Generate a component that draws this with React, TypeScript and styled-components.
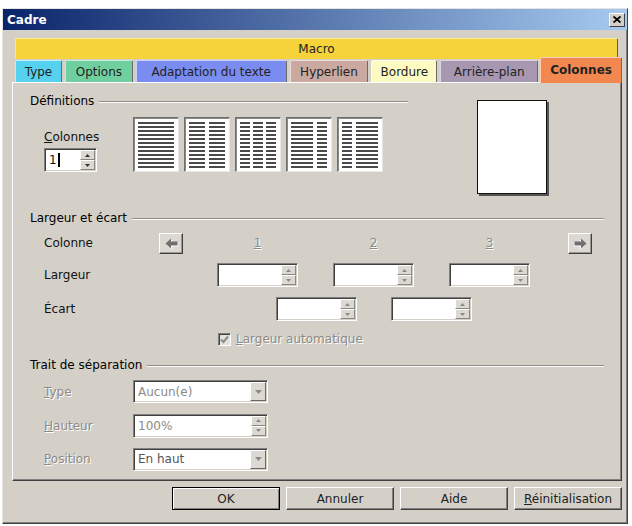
import React from "react";
import styled, { createGlobalStyle } from "styled-components";

const GlobalStyle = createGlobalStyle`
  html, body {
    margin: 0;
    padding: 0;
    background: #fff;
  }
  body {
    font-family: "DejaVu Sans", "Liberation Sans", sans-serif;
    font-size: 12px;
    color: #000;
  }
`;

const FACE = "#d4d0c8";
const GREY_TEXT = "#8c8a86";

const Window = styled.div`
  box-sizing: border-box;
  width: 626px;
  height: 516px;
  margin: 8px 0 0 2px;
  background: ${FACE};
  border: 1px solid;
  border-color: #e6e4e0 #404040 #404040 #e6e4e0;
  box-shadow: inset -1px -1px 0 #808080;
  display: flex;
  flex-direction: column;
`;

const TitleBar = styled.div`
  height: 21px;
  flex: none;
  display: flex;
  align-items: center;
  justify-content: space-between;
  padding: 0 2px 0 4px;
  background: linear-gradient(to right, #0a246a, #a6caf0);
`;

const Title = styled.span`
  color: #fff;
  font-weight: bold;
  font-size: 12px;
`;

const CloseButton = styled.div`
  box-sizing: border-box;
  width: 16px;
  height: 14px;
  background: ${FACE};
  border: 1px solid;
  border-color: #fff #404040 #404040 #fff;
  display: flex;
  align-items: center;
  justify-content: center;
`;

const Body = styled.div`
  flex: 1;
  display: flex;
  flex-direction: column;
  padding: 8px 5px 0 9px;
`;

const TabStrip = styled.div`
  padding-left: 3px;
  display: flex;
  flex-direction: column;
`;

const MacroTab = styled.div`
  box-sizing: border-box;
  height: 21px;
  margin-right: 4px;
  background: #f6d33b;
  border-top: 1px solid #fbe98f;
  border-left: 1px solid #fbe98f;
  border-right: 1px solid #5a5a4a;
  border-radius: 2px 2px 0 0;
  display: flex;
  align-items: center;
  justify-content: center;
  color: #222;
`;

const TabRow = styled.div`
  height: 24px;
  margin-top: -1px;
  display: flex;
  align-items: flex-end;
  gap: 3px;
  position: relative;
  z-index: 1;
`;

const Tab = styled.div<{ $bg: string; $w: number; $active?: boolean }>`
  box-sizing: border-box;
  width: ${(p) => p.$w}px;
  height: ${(p) => (p.$active ? 26 : 22)}px;
  margin-left: ${(p) => (p.$active ? -1 : 0)}px;
  margin-bottom: ${(p) => (p.$active ? -1 : 0)}px;
  background: ${(p) => p.$bg};
  border-top: 1px solid rgba(255, 255, 255, 0.6);
  border-left: 1px solid rgba(255, 255, 255, 0.6);
  border-right: 1px solid #6a6a6a;
  border-radius: 2px 2px 0 0;
  display: flex;
  align-items: center;
  justify-content: center;
  color: #222;
  font-weight: ${(p) => (p.$active ? "bold" : "normal")};
  padding-bottom: ${(p) => (p.$active ? 2 : 0)}px;
`;

const Panel = styled.div`
  box-sizing: border-box;
  height: 399px;
  border: 1px solid;
  border-color: #fff #404040 #404040 #fff;
  box-shadow: inset -1px -1px 0 #808080;
  padding: 11px 17px 0 17px;
  display: flex;
  flex-direction: column;
`;

const Section = styled.div<{ $mt?: number }>`
  margin-top: ${(p) => p.$mt ?? 0}px;
  display: flex;
  flex-direction: column;
`;

const Header = styled.div`
  height: 15px;
  line-height: 15px;
  display: flex;
  align-items: center;
  gap: 5px;
`;

const HeaderLine = styled.div`
  flex: 1;
  height: 0;
  border-top: 1px solid #8e8c88;
  border-bottom: 1px solid #fff;
`;

const DefBlock = styled.div`
  display: flex;
  align-items: flex-start;
`;

const DefLeft = styled.div`
  width: 378px;
  display: flex;
  flex-direction: column;
`;

const DefRow = styled.div`
  margin-top: 8px;
  display: flex;
  align-items: flex-start;
`;

const ColumnsGroup = styled.div`
  width: 89px;
  padding: 13px 0 0 14px;
  display: flex;
  flex-direction: column;
  gap: 4px;
`;

const IconRow = styled.div`
  display: flex;
  gap: 5px;
`;

const IconBox = styled.div`
  box-sizing: border-box;
  width: 46px;
  height: 55px;
  background: #fff;
  border: 1px solid;
  border-color: #6e6e6e #e8e8e8 #e8e8e8 #6e6e6e;
  box-shadow: inset 1px 1px 0 #8a8a8a;
`;

const Preview = styled.div`
  box-sizing: border-box;
  width: 70px;
  height: 94px;
  margin: 6px 0 0 69px;
  background: #fff;
  border: 1px solid #111;
  box-shadow: 2px 2px 0 #555;
`;

const Row = styled.div<{ $mt?: number; $h?: number }>`
  margin-top: ${(p) => p.$mt ?? 0}px;
  height: ${(p) => p.$h ?? 24}px;
  padding-left: 14px;
  display: flex;
  align-items: center;
`;

const Label = styled.span<{ $w?: number; $disabled?: boolean }>`
  flex: none;
  width: ${(p) => (p.$w ? `${p.$w}px` : "auto")};
  color: ${(p) => (p.$disabled ? GREY_TEXT : "#111")};
  text-shadow: ${(p) => (p.$disabled ? "1px 1px 0 #fff" : "none")};
`;

const U = styled.span`
  text-decoration: underline;
`;

const Cells = styled.div<{ $ml?: number; $gap: number }>`
  margin-left: ${(p) => p.$ml ?? 0}px;
  display: flex;
  gap: ${(p) => p.$gap}px;
`;

const NumCell = styled.div`
  width: 81px;
  text-align: center;
  color: ${GREY_TEXT};
  text-shadow: 1px 1px 0 #fff;
  text-decoration: underline;
`;

const ArrowButton = styled.div<{ $ml?: number }>`
  box-sizing: border-box;
  width: 24px;
  height: 21px;
  margin-left: ${(p) => p.$ml ?? 0}px;
  background: #dcd9d2;
  border: 1px solid;
  border-color: #fff #404040 #404040 #fff;
  box-shadow: inset -1px -1px 0 #9a9892;
  display: flex;
  align-items: center;
  justify-content: center;
`;

const Field = styled.div<{ $w: number; $h?: number }>`
  box-sizing: border-box;
  flex: none;
  width: ${(p) => p.$w}px;
  height: ${(p) => p.$h ?? 24}px;
  background: #fff;
  border: 1px solid;
  border-color: #808080 #fff #fff #808080;
  box-shadow: inset 1px 1px 0 #404040, inset -1px -1px 0 ${FACE};
  display: flex;
  padding: 1px;
`;

const FieldText = styled.div<{ $color?: string }>`
  flex: 1;
  padding-left: 3px;
  display: flex;
  align-items: center;
  color: ${(p) => p.$color ?? "#111"};
`;

const Caret = styled.span`
  width: 2px;
  height: 14px;
  margin-left: 1px;
  background: #000;
`;

const SpinColumn = styled.div`
  width: 15px;
  display: flex;
  flex-direction: column;
`;

const SpinButton = styled.div`
  box-sizing: border-box;
  flex: 1;
  background: #dcd9d2;
  border: 1px solid;
  border-color: #fff #8a8882 #8a8882 #fff;
  display: flex;
  align-items: center;
  justify-content: center;
`;

const ComboButton = styled.div`
  box-sizing: border-box;
  width: 16px;
  background: #dcd9d2;
  border: 1px solid;
  border-color: #fff #6a6862 #6a6862 #fff;
  display: flex;
  align-items: center;
  justify-content: center;
`;

const CheckBox = styled.div`
  box-sizing: border-box;
  width: 13px;
  height: 13px;
  margin-left: 174px;
  background: #e4e2dd;
  border: 1px solid;
  border-color: #808080 #fff #fff #808080;
  box-shadow: inset 1px 1px 0 #404040;
  display: flex;
  align-items: center;
  justify-content: center;
`;

const CheckText = styled.span`
  margin-left: 5px;
  color: ${GREY_TEXT};
  text-shadow: 1px 1px 0 #fff;
`;

const ButtonBar = styled.div`
  margin-top: 6px;
  display: flex;
  justify-content: flex-end;
  gap: 6px;
`;

const Button = styled.div<{ $default?: boolean }>`
  box-sizing: border-box;
  width: 108px;
  height: 23px;
  background: ${FACE};
  border: 1px solid;
  border-color: ${(p) =>
    p.$default ? "#000" : "#fff #404040 #404040 #fff"};
  box-shadow: ${(p) =>
    p.$default
      ? "inset 1px 1px 0 #fff, inset -1px -1px 0 #808080"
      : "inset -1px -1px 0 #808080"};
  display: flex;
  align-items: center;
  justify-content: center;
  color: #222;
`;

const TABS = [
  { label: "Type", bg: "#56d2ef", w: 47 },
  { label: "Options", bg: "#70cf9e", w: 68 },
  { label: "Adaptation du texte", bg: "#7a8cf0", w: 151 },
  { label: "Hyperlien", bg: "#caa9a1", w: 79 },
  { label: "Bordure", bg: "#fdfbc2", w: 66 },
  { label: "Arrière-plan", bg: "#a897b1", w: 98 },
  { label: "Colonnes", bg: "#f2884f", w: 82, active: true },
];

// column layout presets: [x, width] of each text column
const PRESETS: [number, number][][] = [
  [[4, 36]],
  [
    [4, 16],
    [24, 16],
  ],
  [
    [4, 10],
    [17, 10],
    [30, 10],
  ],
  [
    [4, 22],
    [30, 10],
  ],
  [
    [4, 10],
    [18, 22],
  ],
];

const LINE_YS = Array.from({ length: 12 }, (_, i) => 4 + i * 4);

const ColumnIcon = ({ cols }: { cols: [number, number][] }) => (
  <IconBox>
    <svg width="44" height="53" viewBox="0 0 44 53">
      {cols.map(([x, w]) =>
        LINE_YS.map((y) => (
          <rect key={`${x}-${y}`} x={x} y={y} width={w} height={2} fill="#4a4a4a" />
        ))
      )}
    </svg>
  </IconBox>
);

const Triangle = ({ dir, color }: { dir: "up" | "down"; color: string }) => (
  <svg width="5" height="3" viewBox="0 0 5 3">
    <polygon
      points={dir === "up" ? "0,3 5,3 2.5,0" : "0,0 5,0 2.5,3"}
      fill={color}
    />
  </svg>
);

const Spinner = ({
  w,
  children,
  enabled,
}: {
  w: number;
  children?: React.ReactNode;
  enabled?: boolean;
}) => (
  <Field $w={w}>
    <FieldText>{children}</FieldText>
    <SpinColumn>
      <SpinButton>
        <Triangle dir="up" color={enabled ? "#333" : "#8a8a8a"} />
      </SpinButton>
      <SpinButton>
        <Triangle dir="down" color={enabled ? "#333" : "#8a8a8a"} />
      </SpinButton>
    </SpinColumn>
  </Field>
);

const Combo = ({ text, color }: { text: string; color: string }) => (
  <Field $w={135} $h={23}>
    <FieldText $color={color}>{text}</FieldText>
    <ComboButton>
      <svg width="7" height="4" viewBox="0 0 7 4">
        <polygon points="0,0 7,0 3.5,4" fill="#8a8a8a" />
      </svg>
    </ComboButton>
  </Field>
);

const BlockArrow = ({ dir }: { dir: "left" | "right" }) => (
  <svg width="13" height="11" viewBox="0 0 13 11">
    <g transform={dir === "right" ? "translate(13,0) scale(-1,1)" : undefined}>
      <polygon points="0.5,5.5 6,0.5 6,3.5 12.5,3.5 12.5,7.5 6,7.5 6,10.5" fill="#fff" transform="translate(1,1)" />
      <polygon points="0.5,5.5 6,0.5 6,3.5 12.5,3.5 12.5,7.5 6,7.5 6,10.5" fill="#707070" />
    </g>
  </svg>
);

export default function App() {
  return (
    <>
      <GlobalStyle />
      <Window>
        <TitleBar>
          <Title>Cadre</Title>
          <CloseButton>
            <svg width="8" height="7" viewBox="0 0 8 7">
              <path d="M0.5 0.5 L7.5 6.5 M7.5 0.5 L0.5 6.5" stroke="#000" strokeWidth="1.8" />
            </svg>
          </CloseButton>
        </TitleBar>

        <Body>
          <TabStrip>
            <MacroTab>Macro</MacroTab>
            <TabRow>
              {TABS.map((t) => (
                <Tab key={t.label} $bg={t.bg} $w={t.w} $active={t.active}>
                  {t.label}
                </Tab>
              ))}
            </TabRow>
          </TabStrip>

          <Panel>
            <DefBlock>
              <DefLeft>
                <Header>
                  Définitions
                  <HeaderLine />
                </Header>
                <DefRow>
                  <ColumnsGroup>
                    <Label>
                      <U>C</U>olonnes
                    </Label>
                    <Spinner w={53} enabled>
                      1<Caret />
                    </Spinner>
                  </ColumnsGroup>
                  <IconRow>
                    {PRESETS.map((cols, i) => (
                      <ColumnIcon key={i} cols={cols} />
                    ))}
                  </IconRow>
                </DefRow>
              </DefLeft>
              <Preview />
            </DefBlock>

            <Section $mt={17}>
              <Header>
                Largeur et écart
                <HeaderLine />
              </Header>
              <Row $mt={5}>
                <Label $w={115}>Colonne</Label>
                <ArrowButton>
                  <BlockArrow dir="left" />
                </ArrowButton>
                <Cells $ml={34} $gap={35}>
                  <NumCell>1</NumCell>
                  <NumCell>2</NumCell>
                  <NumCell>3</NumCell>
                </Cells>
                <ArrowButton $ml={38}>
                  <BlockArrow dir="right" />
                </ArrowButton>
              </Row>
              <Row $mt={8}>
                <Label $w={173}>Largeur</Label>
                <Cells $gap={35}>
                  <Spinner w={81} />
                  <Spinner w={81} />
                  <Spinner w={81} />
                </Cells>
              </Row>
              <Row $mt={10}>
                <Label $w={232}>Écart</Label>
                <Cells $gap={34}>
                  <Spinner w={81} />
                  <Spinner w={81} />
                </Cells>
              </Row>
              <Row $mt={10} $h={16}>
                <CheckBox>
                  <svg width="9" height="9" viewBox="0 0 9 9">
                    <path d="M1 4.5 L3.5 7 L8 1.5" stroke="#8a8a8a" strokeWidth="2" fill="none" />
                  </svg>
                </CheckBox>
                <CheckText>
                  <U>L</U>argeur automatique
                </CheckText>
              </Row>
            </Section>

            <Section $mt={11}>
              <Header>
                Trait de séparation
                <HeaderLine />
              </Header>
              <Row $mt={7} $h={23}>
                <Label $w={89} $disabled>
                  <U>T</U>ype
                </Label>
                <Combo text="Aucun(e)" color="#8c8a86" />
              </Row>
              <Row $mt={11} $h={23}>
                <Label $w={89} $disabled>
                  <U>H</U>auteur
                </Label>
                <Spinner w={135}>
                  <span style={{ color: "#8c8a86" }}>100%</span>
                </Spinner>
              </Row>
              <Row $mt={10} $h={24}>
                <Label $w={89} $disabled>
                  <U>P</U>osition
                </Label>
                <Combo text="En haut" color="#555" />
              </Row>
            </Section>
          </Panel>

          <ButtonBar>
            <Button $default>OK</Button>
            <Button>Annuler</Button>
            <Button>Aide</Button>
            <Button>
              <span>
                <U>R</U>éinitialisation
              </span>
            </Button>
          </ButtonBar>
        </Body>
      </Window>
    </>
  );
}
